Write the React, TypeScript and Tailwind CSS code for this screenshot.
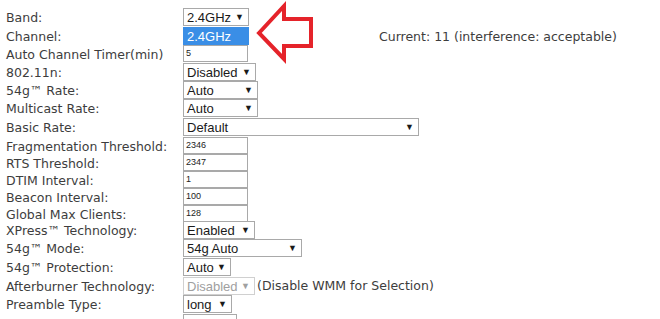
import React from "react";

type Row = {
  label: React.ReactNode;
  h: number;
  kind: "select" | "input" | "none";
  value?: string;
  w?: number;
  disabled?: boolean;
  after?: string;
};

const rows: Row[] = [
  { label: "Band:", h: 19, kind: "select", value: "2.4GHz", w: 66 },
  { label: "Channel:", h: 18, kind: "none" },
  { label: "Auto Channel Timer(min)", h: 18, kind: "input", value: "5", w: 65 },
  { label: "802.11n:", h: 18, kind: "select", value: "Disabled", w: 73 },
  { label: "54g™ Rate:", h: 18, kind: "select", value: "Auto", w: 75 },
  { label: "Multicast Rate:", h: 19, kind: "select", value: "Auto", w: 75 },
  { label: "Basic Rate:", h: 19, kind: "select", value: "Default", w: 236 },
  { label: "Fragmentation Threshold:", h: 17, kind: "input", value: "2346", w: 65 },
  { label: "RTS Threshold:", h: 17, kind: "input", value: "2347", w: 65 },
  { label: "DTIM Interval:", h: 17, kind: "input", value: "1", w: 65 },
  { label: "Beacon Interval:", h: 17, kind: "input", value: "100", w: 65 },
  { label: "Global Max Clients:", h: 16, kind: "input", value: "128", w: 65 },
  { label: "XPress™ Technology:", h: 18, kind: "select", value: "Enabled", w: 72 },
  { label: "54g™ Mode:", h: 19, kind: "select", value: "54g Auto", w: 119 },
  { label: "54g™ Protection:", h: 19, kind: "select", value: "Auto", w: 48 },
  {
    label: "Afterburner Technology:",
    h: 18,
    kind: "select",
    value: "Disabled",
    w: 72,
    disabled: true,
    after: "(Disable WMM for Selection)",
  },
  { label: "Preamble Type:", h: 19, kind: "select", value: "long", w: 49 },
  { label: "", h: 17, kind: "input", value: "", w: 54 },
];

function FakeSelect({ value, w, disabled }: { value: string; w: number; disabled?: boolean }) {
  return (
    <div
      className={`flex h-[18px] items-center justify-between border bg-white pl-[3px] pr-[4px] font-['Liberation_Sans',Arial,sans-serif] text-[13px] leading-none ${
        disabled ? "border-[#d0d0d0] text-[#a0a0a0]" : "border-[#a9a9a9] text-[#1a1a1a]"
      }`}
      style={{ width: w }}
    >
      <span>{value}</span>
      <span className="text-[9px]">▼</span>
    </div>
  );
}

function FakeInput({ value, w }: { value: string; w: number }) {
  return (
    <div
      className="flex h-[17px] items-center border border-[#a9a9a9] bg-white pl-[2px] font-['Liberation_Sans',Arial,sans-serif] text-[9px] leading-none text-[#222]"
      style={{ width: w }}
    >
      {value}
    </div>
  );
}

export default function App() {
  return (
    <div className="relative h-[319px] w-[660px] overflow-hidden bg-white pt-[8px] pl-[6px] font-['DejaVu_Sans',Verdana,sans-serif] text-[12.5px] text-[#3d3d3d]">
      {rows.map((r, i) => (
        <div key={i} className="relative flex items-start" style={{ height: r.h }}>
          <div className="w-[177px] shrink-0 pt-[2px] leading-[15px]">{r.label}</div>
          <div className="flex items-center">
            {r.kind === "select" && <FakeSelect value={r.value!} w={r.w!} disabled={r.disabled} />}
            {r.kind === "input" && <FakeInput value={r.value!} w={r.w!} />}
            {r.after && <span className="ml-[2px] leading-[18px]">{r.after}</span>}
          </div>
          {i === 1 && (
            <span className="absolute left-[373px] top-[2px] leading-[15px]">
              Current: 11 (interference: acceptable)
            </span>
          )}
          {i === 0 && (
            <div className="absolute left-[177px] top-[19px] z-10 flex h-[18px] w-[66px] items-center bg-[#3a8ee6] pl-[4px] font-['Liberation_Sans',Arial,sans-serif] text-[13px] leading-none text-white">
              2.4GHz
            </div>
          )}
        </div>
      ))}

      {/* red callout arrow */}
      <svg className="absolute left-[250px] top-0" width="70" height="64" viewBox="0 0 70 64">
        <polygon
          points="9,33 34,6 34,19 61,19 61,46 34,46 34,59"
          fill="white"
          stroke="#e5232a"
          strokeWidth="4"
          strokeLinejoin="miter"
        />
      </svg>
    </div>
  );
}
